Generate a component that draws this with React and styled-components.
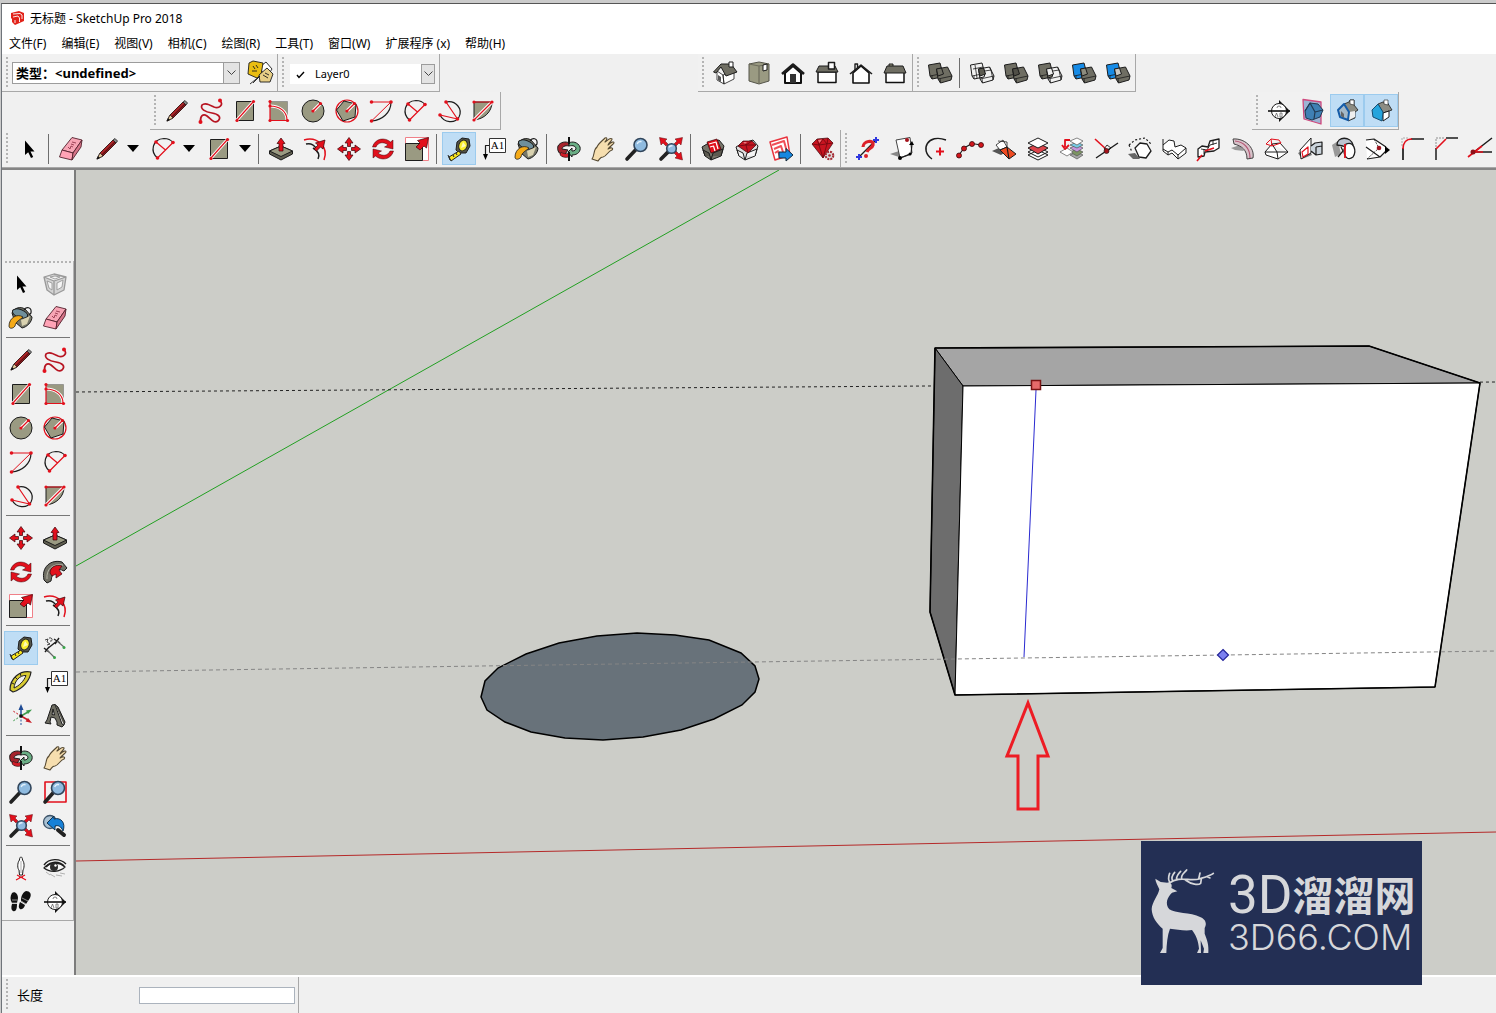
import React, { useState } from 'react';
import styled, { createGlobalStyle } from 'styled-components';

const RED = '#e2101c';
const OLIVE = '#9a9a82';
const DARK = '#1c1c1c';

const GlobalStyle = createGlobalStyle`
  * {
    box-sizing: border-box;
  }

  body {
    margin: 0;
    background: #f0f0f0;
    color: #000;
    font-family: 'Noto Sans', 'Noto Sans CJK SC', sans-serif;
    font-size: 12px;
  }

  button,
  select,
  input {
    font-family: inherit;
  }
`;

const Desktop = styled.div`
  display: flex;
  flex-direction: column;
  min-height: 100vh;
  overflow: hidden;
  background: #cbcbcb;
  padding-top: 3px;
`;

const AppWindow = styled.div`
  position: relative;
  flex: 1;
  display: flex;
  flex-direction: column;
  margin-left: 1px;
  border-top: 1px solid #555;
  border-left: 1px solid #6f747a;
  background: #f0f0f0;
`;

const TitleBar = styled.header`
  display: flex;
  align-items: center;
  gap: 5px;
  height: 29px;
  padding: 0 0 2px 8px;
  background: #fff;
`;

const MenuBar = styled.nav`
  display: flex;
  align-items: center;
  gap: 15px;
  height: 21px;
  padding-left: 7px;
  background: #fff;
`;

const MenuItem = styled.button`
  padding: 0;
  border: none;
  background: none;
  color: #000;
  font-size: 12px;
  line-height: 20px;
  white-space: nowrap;
`;

const ToolbarRow = styled.div`
  display: flex;
  height: 38px;
  overflow: hidden;
`;

const Toolbar = styled.div`
  display: flex;
  flex: none;
  align-items: center;
  margin-left: ${(props) => props.$start || 'initial'};
  margin-right: ${(props) => props.$end || 'initial'};
  padding-left: 3px;
  border-right: 1px solid #a8a8a8;
  border-bottom: 1px solid #a8a8a8;
  background: #f1f1f1;
`;

const Grip = styled.span`
  flex: none;
  width: 2px;
  height: 32px;
  margin: 0 4px 0 1px;
  background: repeating-linear-gradient(#b4b4b4 0 2px, transparent 2px 4px);
`;

const Separator = styled.span`
  flex: none;
  width: 1px;
  height: 30px;
  margin: 0 5px 0 2px;
  background: #6e6e6e;
`;

const ToolButton = styled.button`
  display: flex;
  flex: none;
  align-items: center;
  justify-content: ${(props) => (props.$split ? 'flex-end' : 'center')};
  gap: 8px;
  width: ${(props) => (props.$split ? '56px' : '34px')};
  height: ${(props) => (props.$tall ? '34px' : '33px')};
  padding: 0 ${(props) => (props.$split ? '4px' : '0')} 0 0;
  border: 1px solid ${(props) => (props.$active ? '#9ccbee' : 'transparent')};
  background: ${(props) => (props.$active ? '#bfddf5' : 'none')};

  svg {
    display: block;
    flex: none;
  }
`;

const ComboBox = styled.label`
  position: relative;
  display: block;
  width: ${(props) => props.$width};
  margin: ${(props) => props.$margin};
`;

const ComboSelect = styled.select`
  appearance: none;
  display: block;
  width: 100%;
  height: ${(props) => (props.$plain ? '20px' : '22px')};
  padding: 0 18px 0 ${(props) => (props.$plain ? '24px' : '3px')};
  border: 1px solid ${(props) => (props.$plain ? '#fff' : '#9c9c9c')};
  border-radius: 0;
  background: #fff;
  color: #000;
  font-size: ${(props) => (props.$plain ? '11px' : '13px')};
  font-weight: ${(props) => (props.$plain ? '400' : '700')};
`;

const ComboArrow = styled.span`
  position: absolute;
  top: 0;
  right: 0;
  bottom: 0;
  display: flex;
  align-items: center;
  justify-content: center;
  width: ${(props) => (props.$plain ? '14px' : '17px')};
  border: 1px solid #9c9c9c;
  background: #e3e3e3;
  pointer-events: none;
`;

const ComboCheck = styled.span`
  position: absolute;
  top: 6px;
  left: 6px;
  display: flex;
  pointer-events: none;
`;

const Workspace = styled.main`
  flex: 1;
  display: flex;
  border-top: 2px solid #858585;
  border-bottom: 2px solid #fff;
`;

const Dock = styled.aside`
  flex: none;
  width: 74px;
  padding-top: 91px;
  border-right: 2px solid #7c7c7c;
`;

const DockPanel = styled.div`
  padding-bottom: 1px;
  border-right: 1px solid #b4b4b4;
  border-bottom: 1px solid #a8a8a8;
  background: #f1f1f1;
`;

const DockGrip = styled.div`
  height: 2px;
  margin: 0 2px 4px 3px;
  background: repeating-linear-gradient(90deg, #b4b4b4 0 2px, transparent 2px 4px);
`;

const DockGroup = styled.div`
  display: grid;
  grid-template-columns: 34px 34px;
  padding-left: 2px;

  & + & {
    margin-top: 2px;
    padding-top: 6px;
    background: linear-gradient(#777, #777) 4px 0 / 64px 1px no-repeat;
  }
`;

const Viewport = styled.svg`
  flex: 1;
  display: block;
  min-width: 0;
  background: #cccdc8;
`;

const StatusBar = styled.footer`
  display: flex;
  height: 36px;
`;

const Measurement = styled.label`
  display: flex;
  align-items: center;
  width: 297px;
  padding: 0 3px;
  border-right: 1px solid #a8a8a8;
`;

const MeasurementLabel = styled.span`
  flex: 1;
  padding: 0 0 2px 5px;
  font-size: 13px;
`;

const MeasurementInput = styled.input`
  width: 156px;
  height: 17px;
  border: 1px solid #abb3bd;
  background: #fff;
  font-size: 12px;
`;

const Badge = styled.div`
  position: absolute;
  right: 74px;
  bottom: 28px;
  display: flex;
  gap: 12px;
  width: 281px;
  height: 144px;
  padding: 26px 0 0 9px;
  background: #232f54;
  color: #d6d7da;
`;

const BadgeText = styled.div`
  display: flex;
  flex-direction: column;
  white-space: nowrap;
`;

const BadgeName = styled.span`
  display: flex;
  align-items: center;
  height: 56px;
  font-family: Roboto, sans-serif;
  font-size: 53px;
  font-weight: 400;
  line-height: 56px;
`;

const BadgeNameCjk = styled.span`
  padding-bottom: 4px;
  font-family: 'Noto Sans CJK SC', sans-serif;
  font-size: 41px;
  font-weight: 700;
`;

const BadgeDomain = styled.span`
  font-family: Inter, sans-serif;
  font-size: 36px;
  font-weight: 300;
  line-height: 28px;
`;

const Dots = ({ points, r = 1.6 }) =>
  points.map(([x, y]) => <circle key={`${x}-${y}`} cx={x} cy={y} r={r} fill={RED} />);

const line = { fill: 'none', stroke: DARK, strokeWidth: 1.2 };
const redLine = { fill: 'none', stroke: RED, strokeWidth: 1.2 };
const olive = { fill: OLIVE, stroke: DARK, strokeWidth: 1 };
const red = { fill: RED, stroke: '#3a0508', strokeWidth: 0.7 };
const white = { fill: '#fff', stroke: DARK, strokeWidth: 1 };
const steel = { fill: '#6f6e63', stroke: DARK, strokeWidth: 1 };

const Lens = ({ cx = 15.5, cy = 8, r = 6.5 }) => (
  <>
    <path d={`M2 22 L${cx - r * 0.7} ${cy + r * 0.7}`} stroke="#222" strokeWidth="3.6" strokeLinecap="round" />
    <circle cx={cx} cy={cy} r={r} fill="#8fbbe0" stroke="#31465c" strokeWidth="1.6" />
    <path d={`M${cx - r * 0.5} ${cy - 1} A${r * 0.5} ${r * 0.5} 0 0 1 ${cx + 1} ${cy - r * 0.5}`} fill="none" stroke="#e2f1fc" strokeWidth="1.4" />
  </>
);

// Two overlapping solids shared by the solid tools
const Solids = ({ back, front, overlap }) => (
  <>
    <path d="M0.5 4 L12 2 L15 13 L14 16 L4 18 L2 15 Z" fill={back} stroke={DARK} />
    <path d="M2 15 L12 13 L15 13 M4 14.500 L4 18" {...line} strokeWidth="0.800" />
    <path d="M8.5 8 L19.5 6 L24 15 L23 19 L12.500 22 L10 18 Z" fill={front} stroke={DARK} />
    <path d="M10 18 L24 15 M12 17.500 L12.500 22" {...line} strokeWidth="0.800" />
    {front === 'none' && <path d="M8.500 11 L21 9 L23 19 M19.500 6 L21 9" {...line} strokeWidth="0.800" />}
    {back === 'none' && <path d="M3 8 L13 6 M5 4 L7 17" {...line} strokeWidth="0.800" />}
    <path d="M8.5 8 L13.500 7 L15.500 13 L10 15 Z" fill={overlap} stroke={DARK} />
  </>
);

const SectionMark = () => (
  <>
    <path d="M12 1 L23 12 L12 23 L12 20 L18 12 L12 4 Z" fill="#111" />
    <circle cx="12" cy="12" r="7.5" {...white} />
    <path d="M1 12 H23" stroke="#111" strokeWidth="1.6" />
    <path d="M10 9 a2 2 0 1 1 4 0 M8 18 l1.5 -4 l1.5 4 M13 14 v4 M13 14 h2 v4 h-2" {...line} stroke="#666" strokeWidth="0.8" />
  </>
);

const Crate = ({ gem }) => (
  <>
    <path d="M1 10 L6 7 L18 3 L23 9 L20 19 L10 23 L4 19 Z" fill={gem ? '#dedede' : '#77756a'} stroke={DARK} />
    <path d="M4 19 L2 13 L8 16 L10 23 L12 16 L22 12 L20 19" fill={gem ? '#f4f4f4' : '#5c5a50'} stroke={DARK} />
    {gem ? (
      <>
        <path d="M3 9 L8 4 L17 4 L21 8 L13 16 Z" {...red} fill="#c41420" />
        <path d="M8 4 L11 8 L17 4 M3 9 L11 8 L21 8 M11 8 L13 16" {...line} stroke="#6c0810" strokeWidth="0.800" />
        <path d="M8 5 H12 L10 7 Z" fill="#f07a80" />
      </>
    ) : (
      <>
        <path d="M6 5 L16 2 L20 12 L10 16 Z" {...red} />
        <path d="M8 7 L15 5 L17 12 M9 10 L12.500 9 L14 14" fill="none" stroke="#fff" strokeWidth="1.200" />
      </>
    )}
  </>
);

const drawings = {
  select: <path d="M8 3.500 V18 L11.200 15.200 L14 21 L16.200 20 L13.500 14.500 H17.500 Z" fill="#000" />,
  component: (
    <g fill="none" stroke="#999" strokeWidth="1.300">
      <path d="M1 5 L11 2 L23 5 L21 18 L11 23 L4 18 Z M1 5 L11 9 L23 5 M11 9 V23" fill="#d4d4d4" />
      <path d="M4 9 L9 11 V18 L6 16 Z M14 11 L20 8 L19 15 L14 18 Z M7 5 L12 4 L17 5 L12 7 Z" fill="#f4f4f4" strokeWidth="0.900" />
    </g>
  ),
  paint: (
    <>
      <path d="M3 7 C5 2 11 0 16 3 L23 11 C23 16 18 21 13 22 L6 16 Z" fill="#77786a" stroke={DARK} />
      <ellipse cx="11" cy="7.500" rx="8" ry="4" fill="#6f8f9b" stroke={DARK} transform="rotate(20 11 7.500)" />
      <path d="M12 14 L21 10 L18 18 L13 20 Z" fill="#d9d2b0" />
      <path d="M15 4 C17 0 23 1 22 7 L20 9" {...line} />
      <path d="M14 11 C8 7 0 12 0 20 C0 23 4 23 6 20 C7 15 11 14 14 11 Z" fill="#f5aa18" stroke={DARK} strokeWidth="0.800" />
    </>
  ),
  eraser: (
    <g stroke="#54202c" strokeWidth="0.900" strokeLinejoin="round">
      <path d="M13 0.500 L23 3 L14 16 L3 13 Z" fill="#f7a5b5" />
      <path d="M3 13 L14 16 L13 23 L0.500 20 Z" fill="#ffa3b6" />
      <path d="M14 16 L23 3 L22 10 L13 23 Z" fill="#d77589" />
      <path d="M9 10 L11 12 L12 9 L14 10 M12 7 L15 8 M13 5 L17 6" fill="none" stroke="#94394d" />
    </g>
  ),
  pencil: (
    <>
      <path d="M2 22 L5 16 L18 3 L21 6 L8 19 Z" fill="#ab2427" stroke="#33100e" strokeWidth="0.900" />
      <path d="M2 22 L5 16 L8 19 Z" fill="#e9cf9f" stroke="#222" strokeWidth="0.700" />
      <path d="M1.500 22.500 L3 19 L5 21 Z" fill="#111" />
      <path d="M18 3 L20 1.500 L22.500 4 L21 6 Z" fill="#888" stroke="#222" strokeWidth="0.800" />
      <path d="M7 18 L20 5" stroke="#5e1013" strokeWidth="1.200" />
    </>
  ),
  freehand: (
    <>
      <path d="M1.500 23 C1 17 4 14 8 17 C12 20 15 25 19 22 C23 18 19 15 13 14 C6 13 1 10 3 6 C6 3 11 6 15 8 C20 10 25 6 21 1.500" fill="none" stroke="#b71522" strokeWidth="1.700" />
      <Dots points={[[1.5, 23], [21, 1.5]]} r={2} />
    </>
  ),
  rectangle: (
    <>
      <rect x="3.500" y="2.500" width="17" height="19" {...olive} />
      <path d="M4 21 L20 3" stroke="#fff" strokeWidth="3.200" />
      <path d="M4 21 L20 3" {...redLine} />
      <Dots points={[[4, 21.5], [20.5, 2.5]]} />
    </>
  ),
  rotatedRectangle: (
    <>
      <rect x="3.500" y="2.500" width="17" height="19" {...olive} stroke="#777" strokeWidth="0.600" />
      <path d="M3 7 C12 7 20 12 20 21" stroke="#fff" strokeWidth="3" fill="none" />
      <path d="M3 2 V21.500 H20 M3 7 C12 7 20 12 20 21" {...redLine} />
      <Dots points={[[3, 2.5], [3, 7], [3, 21.5], [20.5, 21.5]]} />
    </>
  ),
  circle: (
    <>
      <circle cx="12" cy="12" r="11" {...olive} />
      <path d="M12 12 L19 5" stroke="#fff" strokeWidth="3.200" />
      <path d="M12 12 L19.500 4.500" {...redLine} />
      <Dots points={[[12, 12], [19.5, 4.5]]} />
    </>
  ),
  polygon: (
    <>
      <circle cx="12" cy="12" r="11" {...redLine} />
      <path d="M9 2 L21 5 L20 18 L8 22 L1.500 11 Z" {...olive} />
      <path d="M12 12 L19 5" stroke="#fff" strokeWidth="3.200" />
      <path d="M12 12 L19.500 4.500" {...redLine} />
      <Dots points={[[12, 12], [19.5, 4.5]]} />
    </>
  ),
  arc: (
    <>
      <path d="M22 3 C22 14 13 21 3 22" {...line} />
      <path d="M2.500 3 H22 L2.500 22" {...redLine} strokeWidth="1" />
      <Dots points={[[2.5, 3], [22, 3], [2.5, 22]]} r={1.8} />
    </>
  ),
  twoPointArc: (
    <>
      <path d="M6.500 21 C-1 15 1 2 13 1.500 C17 1.500 20 3 22 5.500" {...line} />
      <path d="M5 5 L14.500 13 M22 5.500 L6.500 21" {...redLine} />
      <Dots points={[[5, 5], [22, 5.5], [6.5, 21]]} r={1.8} />
    </>
  ),
  threePointArc: (
    <>
      <path d="M9 3 C19 1 26 10 22 18 C18 25 7 24 3 16" {...line} />
      <path d="M9 3 L20.500 20 L3 16" {...redLine} />
      <Dots points={[[9, 3], [20.5, 20], [3, 16]]} r={1.8} />
    </>
  ),
  pie: (
    <>
      <path d="M3 3 H21 C21 13 13 20 3 21 Z" {...olive} />
      <path d="M3 21 L21 3" stroke="#fff" strokeWidth="3.200" />
      <path d="M3 3 H21 L3 21" {...redLine} />
      <Dots points={[[3, 3], [21, 3], [3, 21]]} />
    </>
  ),
  pushPull: (
    <>
      <path d="M0.500 14 L12 9 L23.500 14 V17 L12 23 L0.500 17 Z" fill="#5f5e50" stroke={DARK} />
      <path d="M0.500 14 L12 9 L23.500 14 L12 19.500 Z" {...olive} />
      <path d="M12 1 L16 6.500 H14 V14 H10 V6.500 H8 Z" {...red} />
    </>
  ),
  offset: (
    <>
      <path d="M1 3 C14 -1 26 10 21 23" {...redLine} strokeWidth="1.500" />
      <path d="M3 7 C7 6 11 8 13 11 M10 11 C15 14 17 18 15 22" {...line} strokeWidth="1.500" />
      <path d="M11 12 L15 8 L12.500 6 L22 3 L20 12 L17.500 10 L13.500 14 Z" {...red} />
    </>
  ),
  move: (
    <g {...red}>
      <path d="M12 0.500 L16 6 H13.500 V9.500 H10.500 V6 H8 Z M12 23.500 L16 18 H13.500 V14.500 H10.500 V18 H8 Z" />
      <path d="M0.500 12 L6 8 V10.500 H9.500 V13.500 H6 V16 Z M23.500 12 L18 8 V10.500 H14.500 V13.500 H18 V16 Z" />
    </g>
  ),
  rotate: (
    <g {...red} strokeWidth="0.500">
      <path d="M1.500 10 C4 1 14 0 19.500 5 L22 3 V12 L13.500 10 L17 8 C13 4.500 7 5 5 10 Z" />
      <path d="M22.500 14 C20 23 10 24 4.500 19 L2 21 V12 L10.500 14 L7 16 C11 19.500 17 19 19 14 Z" />
    </g>
  ),
  followMe: (
    <>
      <path d="M1 20 C-2 7 8 -1 19 2 L24 8 L21 11 C14 7 9 12 8 21 L4 23 Z" {...steel} />
      <path d="M4 19 C3 9 10 3 20 5" {...line} stroke="#c9c7b8" strokeWidth="0.800" />
      <path d="M7 13 C7 7 13 4 19 6 L16 10 L19 14 L13 18 L13 14 L9 16 Z" {...red} />
    </>
  ),
  scale: (
    <>
      <path d="M0.500 0.500 H23.500 V23.500 H0.500 Z" fill="#fff" stroke="#f08088" />
      <rect x="0.500" y="6.500" width="17" height="17" {...olive} />
      <path d="M11 10 L15 6 L12.500 3.500 L23.500 0.500 L21.500 11 L19 9 L15 13 Z" {...red} />
    </>
  ),
  tape: (
    <>
      <path d="M10 5 L15 1 L22 2 L23 9 L19 16 L12 16 L9 13 Z" fill="#55554c" stroke={DARK} />
      <ellipse cx="16" cy="8.500" rx="4.200" ry="5.500" fill="#f8ec2c" stroke="#222" transform="rotate(20 16 8.500)" />
      <path d="M16 5 L19 9 L14 11 Z" fill="#fffbb8" />
      <path d="M12 14 L2 20 L4 24 L14 17 Z" fill="#f8e51c" stroke="#222" />
      <path d="M1 18 L3 23 M6 18 L7 20 M9 16 L10 18" stroke="#222" />
    </>
  ),
  text: (
    <>
      <path d="M8.500 1.500 H24.500 V15.500 H8.500 Z" fill="#fff" stroke="#333" />
      <text x="16.500" y="12" fontFamily="Liberation Serif, serif" fontSize="11" textAnchor="middle">A1</text>
      <path d="M8 8.500 H4.500 V18" {...line} />
      <path d="M2 17 H7 L4.500 23 Z" fill="#000" />
    </>
  ),
  dimension: (
    <>
      <path d="M4 13 L14 5 M1 12 L6 16 M2 16 L6 11 M11 3 L17 7 M12 8 L16 2" {...line} strokeWidth="1.400" />
      <path d="M4 14 L11 21 M14 5 L21 11" {...line} stroke="#666" />
      <path d="M2 4 L5 3 L4 6 L7 8 L4 9 M6 2 C10 1 10 6 7 5" {...line} strokeWidth="0.800" />
      <circle cx="11.500" cy="21.500" r="1.500" fill="#39a54a" />
      <circle cx="21" cy="11.500" r="1.500" fill="#39a54a" />
    </>
  ),
  protractor: (
    <>
      <path d="M22 2 C11 0 1 8 1 20 L4 22 C14 19 21 10 22 2 Z" fill="#d8ca32" stroke="#222" strokeWidth="1.200" />
      <path d="M17 5.500 C11 5 5.500 11 5 18 C10 16 15 11 17 5.500 Z" fill="#f1f1f1" stroke="#222" />
      <path d="M11 3 L12 6 M6 7 L8 9 M3 13 L5 14" stroke="#222" />
    </>
  ),
  axes: (
    <>
      <path d="M12 12 V5" stroke="#27559b" strokeWidth="1.600" />
      <path d="M12 0 L14.500 6 H9.500 Z" fill="#1e4a94" />
      <path d="M12 12 L19 8" stroke="#3e9b4c" strokeWidth="1.600" />
      <path d="M23 5.500 L19 10 L17 6.500 Z" fill="#3e9b4c" />
      <path d="M12 12 L19 16" stroke="#c91b25" strokeWidth="1.600" />
      <path d="M23 19 L16.500 17.500 L19 14 Z" fill="#c91b25" />
      <path d="M12 12 V22" stroke="#27559b" strokeDasharray="2 1.500" />
      <path d="M12 12 L4 17" stroke="#3e9b4c" strokeDasharray="2 1.500" />
      <path d="M12 12 L4 7" stroke="#c91b25" strokeDasharray="2 1.500" />
      <circle cx="12" cy="12" r="1.800" fill="#111" />
    </>
  ),
  text3d: (
    <>
      <path d="M9 1 L12 0.500 L19 20 L21 21 L19 23 L14 21 L14 18 L12 14 L8 13 L7 18 L8 20 L2 19 L4 16 Z" {...steel} />
      <path d="M10 5 L9 10.500 L11.500 11 Z" fill="#eee" stroke={DARK} />
      <path d="M12 0.500 L15 3 L22 18 L21 21" fill="#55544b" stroke={DARK} />
    </>
  ),
  orbit: (
    <>
      <path d="M1 9 C3 5 9 4 12 6 V9 C8 8 5 10 5 12 L11 13 L6 20 L5 18 C1 16 0 12 1 9 Z" fill="#a5232c" stroke={DARK} />
      <path d="M23 10 C21 5 15 4 12 6 V9 C16 8 19 9 19 12 C18 14 16 14 15 14 V11 L11 15 L15 20 V18 C21 18 24 14 23 10 Z" fill="#6aae85" stroke={DARK} />
      <path d="M4 15 C6 17 9 17 12 16 V20 C8 21 5 20 3 18 Z" fill="#d31c28" stroke={DARK} strokeWidth="0.600" />
      <path d="M12 0 V7 M12 15 V24" stroke="#111" strokeWidth="2" />
    </>
  ),
  pan: (
    <path
      d="M1 22 C4 18 2 13 6 10 C7 7 11 4 14 1 C16 0 17 2 14 5 C16 4 19 0 21 2 C22 3 17 6 17 8 C20 5 23 4 23 6 C23 7 18 10 17 12 C20 10 23 11 21 13 C17 14 16 19 12 20 C9 20 9 22 7 24 Z"
      fill="#f6deaf"
      stroke="#554932"
      strokeWidth="1.100"
    />
  ),
  zoom: <Lens />,
  zoomWindow: (
    <>
      <rect x="2" y="2" width="21" height="20" {...redLine} strokeWidth="1.600" />
      <Lens cx={15} cy={8} />
    </>
  ),
  zoomExtents: (
    <>
      <g fill="#e2101c" stroke="#5c0b10" strokeWidth="0.500">
        <path d="M0.500 0.500 L8 2 L6 4 L9 7 L7 9 L4 6 L2 8 Z" />
        <path d="M23.500 0.500 L16 2 L18 4 L15 7 L17 9 L20 6 L22 8 Z" />
        <path d="M23.500 23 L16 21 L18 19 L15 16 L17 14 L20 17 L22 15 Z" />
      </g>
      <Lens cx={12.5} cy={11.5} r={4.8} />
    </>
  ),
  previous: (
    <>
      <circle cx="7" cy="8" r="6.500" fill="#a9c1d3" stroke="#3c5368" strokeWidth="1.300" />
      <path d="M15 16 L21 21" stroke="#222" strokeWidth="4" strokeLinecap="round" />
      <path d="M4 9 L11 2 V5 C18 3 23 9 20 17 C18 12 15 11 12 12 V16 Z" fill="#1781d8" stroke="#12334f" />
    </>
  ),
  positionCamera: (
    <>
      <path d="M10.500 4 C10.500 0 13.500 0 13.500 4 C16 7 15 13 14 14 L13.500 19 H10.500 L10 14 C8.500 13 8 7 10.500 4 Z" {...white} />
      <path d="M12 5 V17" {...line} stroke="#888" strokeWidth="0.700" />
      <path d="M8 19 L17 24 M16 19 L7 24 M10 21 H14" {...redLine} />
    </>
  ),
  lookAround: (
    <>
      <path d="M1 12 C6 6 17 6 22 11 C17 16 7 17 1 12 Z" fill="#f5f5f5" stroke="#222" strokeWidth="1.300" />
      <path d="M1 9 C6 2 17 2 23 8" {...line} strokeWidth="1.400" />
      <path d="M3 11 C8 5 16 5 21 10" {...line} strokeWidth="1.800" />
      <circle cx="11" cy="11" r="4" fill="#2b2b2b" />
      <circle cx="12.500" cy="9.500" r="1.200" fill="#fff" />
      <path d="M3 16 L7 19 M7 18 L12 21 M13 19 L19 20 M17 17 L22 18" stroke="#aaa" strokeWidth="0.900" />
    </>
  ),
  walk: (
    <g fill="#111">
      <path d="M3 3 C6 1 9 4 9 8 L8 13 L3 13 C1 10 1 6 3 3 Z M3 14 L8 14 C8 19 7 22 4 21 C2 20 2 17 3 14 Z" />
      <path d="M17 1 C21 1 23 4 21 8 L17 14 L12 11 C12 7 13 3 17 1 Z M11 12 L16 15 C15 19 12 20 11 19 C9 17 10 15 11 12 Z" />
      <path d="M3 10 H8 M3 13 H8 M13 8 L19 11 M12 11 L17 14" stroke="#999" strokeWidth="0.900" />
    </g>
  ),
  section: <SectionMark />,
  iso: (
    <>
      <path d="M4 10 L10 14 L11 23 L4 19 Z M10 14 L21 10 V18 L11 23 Z" {...white} strokeWidth="0.800" />
      <path d="M0.500 11 L8 3 L18 3 L24 11 L13 15 L8 6 L3 12 Z" {...steel} />
      <path d="M5 14 L8 16 V21 L5 19 Z" fill="#555" />
      <path d="M16 1 H20 V6 H16 Z" {...white} />
    </>
  ),
  top: (
    <>
      <path d="M2 3 L12 1 L22 3 V20 L12 23 L2 20 Z" {...olive} stroke="#55554a" />
      <path d="M12 5 V23 M2 3 L12 5 L22 3" {...line} stroke="#6d6c5c" />
      <path d="M16 4 L20 3 V9 L16 10 Z" {...white} />
    </>
  ),
  front: (
    <>
      <path d="M4 12 V22 H20 V12 L12 5 Z" fill="#fff" stroke="#111" strokeWidth="2" />
      <path d="M1 13 L12 3.500 L23 13" {...line} strokeWidth="2.600" />
      <path d="M9 13 H15 V22 H9 Z" fill="#333" />
    </>
  ),
  right: (
    <>
      <path d="M3 11 H21 V21.500 H3 Z" fill="#fff" stroke="#111" strokeWidth="1.500" />
      <path d="M4 5 H20 L23 11 H1 Z" {...steel} />
      <path d="M13.500 1.500 H19.500 V8 H13.500 Z" {...white} strokeWidth="1.500" />
    </>
  ),
  back: (
    <>
      <path d="M6 9 V3 H8.500 V7" {...white} strokeWidth="1.400" />
      <path d="M4 12 V22 H20 V12 L12 5 Z" fill="#fff" stroke="#111" strokeWidth="1.600" />
      <path d="M1 13 L12 4 L23 13" {...line} strokeWidth="1.600" />
    </>
  ),
  left: (
    <>
      <path d="M6 5 V3 H10 V5" {...olive} />
      <path d="M3 11 H21 V21.500 H3 Z" fill="#fff" stroke="#111" strokeWidth="1.500" />
      <path d="M4 5 H20 L23 12 H1 Z" {...steel} />
    </>
  ),
  outerShell: <Solids back="#6f6e63" front="#6f6e63" overlap="#6f6e63" />,
  intersect: <Solids back="none" front="none" overlap="#5c5b51" />,
  union: <Solids back="#6f6e63" front="#6f6e63" overlap="#504f47" />,
  subtract: <Solids back="#6f6e63" front="none" overlap="#eee" />,
  trim: <Solids back="#168be6" front="#6f6e63" overlap="#8d8c7e" />,
  split: <Solids back="#168be6" front="#6f6e63" overlap="#c9c9c4" />,
  sectionPlanes: (
    <>
      <path d="M2 0.500 L20 3 L20 25 L3 20 Z" fill="#9db4d4" stroke="#d0497e" strokeWidth="1.300" />
      <path d="M4 12 L9 4 L17 5 L22 11 L19 18 L11 21 L5 19 Z" fill="#3f80b4" stroke="#223a52" />
      <path d="M4 12 L9 4 L14 13 L22 11 M14 13 L13 20" {...line} stroke="#223a52" />
    </>
  ),
  sectionCuts: (
    <>
      <path d="M9 5 L14 3 L15 1 H19 V6 L23 11 L20 13 V19 L13 22 Z" fill="#8d8d84" stroke={DARK} strokeWidth="0.800" />
      <path d="M14 13 L20 12 V18 L14 21 Z" fill="#eee" />
      <path d="M3 11 L9 5 L14 13 L13 21 L5 18 Z" fill="#a4b8c8" stroke="#155ca8" strokeWidth="2" />
      <path d="M6 12 L9 15 V19 L6 17 Z" fill="#666" />
      <path d="M15 1 H19 V6 L15 5 Z" fill="#fff" stroke={DARK} strokeWidth="0.600" />
    </>
  ),
  sectionFill: (
    <>
      <path d="M9 5 L14 3 L18 3 L23 11 L14 14 Z" fill="#8d8d84" stroke={DARK} strokeWidth="0.800" />
      <path d="M14 14 L20 12 V18 L14 22 Z" {...white} />
      <path d="M3 11 L9 5 L14 13 L13 22 L4 18 Z" fill="#25a4dc" stroke="#174d70" />
      <path d="M15 1 H19 V6 L15 5 Z" fill="#fff" stroke={DARK} strokeWidth="0.600" />
    </>
  ),
  warehouse: <Crate />,
  extensionWarehouse: <Crate gem />,
  layout: (
    <>
      <path d="M1 5 L18 0 L21 18 L6 23 Z" fill="#fff" stroke="#e9343e" strokeWidth="1.500" />
      <path d="M3 8 L15 4 L18 15 M5 12 L12 9 L14 15 M6 16 L9 14 L11 20" {...redLine} stroke="#ef5058" strokeWidth="2" />
      <path d="M10 15 H17 V11.500 L24 18 L17 24 V21 H10 Z" fill="#1687e0" stroke="#14293b" />
    </>
  ),
  extensionManager: (
    <>
      <path d="M1 7 L6 2 L17 1 L22 6 L12 21 Z" {...red} fill="#c81420" />
      <path d="M1 7 L8 8 L22 6 M6 2 L8 8 L12 21 L16 7 L17 1 M8 8 L12 2 L16 7" {...line} stroke="#70070f" strokeWidth="0.800" />
      <path d="M7 3 L11 2.500 L8.500 6 Z" fill="#f0757c" />
      <circle cx="18.500" cy="18.500" r="3.800" fill="#ddd" stroke="#a52a33" strokeWidth="2" strokeDasharray="2 1" />
      <circle cx="18.500" cy="18.500" r="1.300" fill="#a52a33" />
    </>
  ),
  query: (
    <>
      <path d="M3 20 L20 3" {...line} />
      <path d="M7 10 C7 4 18 2 17 8 C16 12 12 11 11 15" fill="none" stroke="#dc2029" strokeWidth="3.200" />
      <circle cx="10" cy="19" r="2" fill="#dc2029" />
      <path d="M17 3 H23 M20 0 V6 M0 20 H6 M3 17 V23" stroke="#3038df" strokeWidth="2" />
    </>
  ),
  rotateFace: (
    <>
      <path d="M0 17 L9 14 L20 18 L12 21 Z" fill="#888" />
      <path d="M6 3 L20 0.500 L22 16 L10 21 Z" {...white} stroke="#444" />
      <path d="M10 21 L21 17 L22 7" {...line} />
      <circle cx="17" cy="3" r="2" fill="#a5131c" />
      <circle cx="10" cy="21" r="2" fill="#000" />
      <circle cx="20" cy="17" r="1.500" fill="#000" />
      <path d="M19 8 L22 4 L24 8 Z" fill="#000" />
    </>
  ),
  arcCenter: (
    <>
      <path d="M8 22 C-5 13 4 -4 22 3" {...line} strokeWidth="1.400" />
      <path d="M12 14.500 H20 M16 10.500 V18.500" stroke={RED} strokeWidth="2" />
    </>
  ),
  weld: (
    <>
      <path d="M1 18 L6 11 L14 6.500 L23 8" {...line} />
      <g fill="#d3151c" stroke="#38080b" strokeWidth="0.800">
        <circle cx="1" cy="18.500" r="2.500" />
        <circle cx="6" cy="11.500" r="2.500" />
        <circle cx="14" cy="7" r="2.500" />
        <circle cx="23" cy="8" r="2.500" />
      </g>
    </>
  ),
  unfold: (
    <>
      <path d="M0 14 L9 10 L15 14 L9 18 Z" fill="#555" />
      <path d="M4 8 L11 3 L15 10 L8 13 Z M6 4 L15 5 L15 10" {...white} strokeWidth="0.800" />
      <path d="M8 13 L15 10 L24 17 L17 22 Z" fill="#ee4b22" stroke={DARK} />
      <path d="M15 10 L17 22" {...line} />
    </>
  ),
  stack: (
    <>
      <path d="M2 18 L12 13 L22 18 L12 23 Z M2 15 L12 10 L22 15 L12 20 Z" {...white} />
      <path d="M2 11 L12 6 L22 11 L12 17 Z" fill="#dd454c" stroke={DARK} />
      <path d="M2 6 L12 1 L22 6 L12 11 Z" {...white} />
    </>
  ),
  stackColors: (
    <>
      <g stroke="#555" strokeWidth="0.700">
        <path d="M10 18 L17 15 L23 18 L17 22 Z" fill="#a8a8a8" />
        <path d="M10 15 L17 12 L23 15 L17 19 Z" fill="#7c9562" />
        <path d="M10 11 L17 8 L23 11 L17 15 Z" fill="#c796de" />
        <path d="M10 8 L17 5 L23 8 L17 11 Z" fill="#76cce6" />
        <path d="M10 4 L17 1 L23 4 L17 8 Z" fill="#fff" />
        <path d="M0 15 L7 11 L13 15 L7 19 Z" fill="#fff" />
      </g>
      <path d="M10 3 H5 V10 M2 8 L5 12 L9 8" {...redLine} strokeWidth="1.800" />
    </>
  ),
  intersectLines: (
    <>
      <path d="M2 21 L24 6" {...line} strokeWidth="1.400" />
      <path d="M1 2 L13 13" {...redLine} strokeWidth="1.600" />
      <path d="M13 8 L17 11 L13 15 L10 12 Z" {...line} strokeWidth="0.900" />
      <circle cx="12.500" cy="14" r="2.500" fill="#a6121a" stroke="#222" strokeWidth="0.700" />
    </>
  ),
  offsetSolid: (
    <>
      <path d="M0 17 L7 16 L12 22 L5 22 Z" fill="#666" />
      <path d="M1 8 L7 3 L17 1 L23 7" {...line} strokeDasharray="2 2" />
      <path d="M7 11 L12 6 L19 7 L23 14 L18 21 L11 20 Z" {...white} strokeWidth="1.300" />
      <path d="M1 8 L4 15" {...line} strokeDasharray="2 2" />
    </>
  ),
  extrude: (
    <path d="M1 2 V14 L6 18 L10 16 L16 22 L24 16 V11 L19 8 L13 10 L12 4 L7 3 L1 8 M1 12 L6 15 L10 13 L16 18 L24 11 M6 15 V18 M16 18 V22" {...white} />
  ),
  sweep: (
    <>
      <path d="M2 12 L6 9 L12 10 L14 4 L23 2 V11 L18 14 L9 15 L8 19 L2 20 Z" {...white} strokeWidth="1.300" />
      <path d="M5 12 L11 13 L14 8 L21 6 M8 12 L8 17 M17 4 V8" {...line} strokeWidth="0.900" />
      <path d="M1 24 L6 18 M9 14 L18 11" {...redLine} strokeWidth="1.600" />
    </>
  ),
  pipe: (
    <>
      <path d="M1 11 L10 8 L14 14 L5 13 Z" fill="#999" />
      <path d="M3 2 C14 1 25 10 23 21 L17 22 C17 13 12 9 4 7 Z" fill="#d8c3ca" stroke="#444" />
      <path d="M5 4 C14 5 20 11 20 21" {...redLine} stroke="#b35372" />
    </>
  ),
  loft: (
    <>
      <path d="M1 15 L8 7 L16 6 L24 15 L14 22 L2 18 Z M8 7 L13 15 L24 15 M13 15 L14 22 M1 15 L13 15" {...white} />
      <path d="M2 7 L7 2 L15 3 L17 6 L8 9 Z M7 2 L8 9" {...redLine} strokeWidth="1" />
    </>
  ),
  mirror: (
    <>
      <path d="M0 16 L10 11 L14 18 L4 22 Z" fill="#777" />
      <path d="M2 13 L13 1 V16 L3 22 Z" {...white} />
      <path d="M4 15 L10 10 V17 L5 20 Z" {...redLine} />
      <path d="M13 9 L17 6 L24 5 V17 L18 18 L13 14 M18 10 L24 9 M18 10 V18" {...line} fill="#cbd4dc" />
    </>
  ),
  shape: (
    <>
      <path d="M0 8 L6 4 L9 17 L3 20 Z" fill="#999" />
      <path d="M5 8 C5 -1 19 -1 21 8 L15 11 L11 9 Z" fill="#bcc4d0" stroke={DARK} strokeWidth="1.300" />
      <path d="M14 7 C22 4 25 14 21 20 C16 24 12 20 12 13 Z" {...white} strokeWidth="1.300" />
      <path d="M9 10 L11 14 L6 20" {...line} />
      <path d="M13 7 V21" {...redLine} strokeWidth="1.800" />
    </>
  ),
  project: (
    <>
      <path d="M0 3 L8 2 L23 12 L14 20 L1 22 Z" fill="#fff" />
      <path d="M0 3 L8 2 L20 10 M0 10 L14 20 L1 22 M14 20 L20 14" {...line} />
      <path d="M1 22 L13 11 L8 2" {...line} strokeWidth="0.800" strokeDasharray="2 1" />
      <path d="M19 9 L24 13 L19 17 Z" fill="#000" />
      <circle cx="13" cy="11" r="2.300" fill="#9e1520" />
    </>
  ),
  fillet: (
    <>
      <path d="M3 23 V11 M11 2 H24" {...line} strokeWidth="1.700" />
      <path d="M3 12 C3 6 6 2 12 2" {...redLine} strokeWidth="1.600" />
      <path d="M2 9 V1 H9" {...line} stroke="#999" strokeWidth="0.800" strokeDasharray="2 1" />
    </>
  ),
  chamfer: (
    <>
      <path d="M2 23 V11 M12 1 H24" {...line} strokeWidth="1.500" />
      <path d="M2 12 L12 2" {...redLine} strokeWidth="1.600" />
      <path d="M2 10 V1 H10" {...line} stroke="#777" strokeWidth="0.800" strokeDasharray="2 1" />
    </>
  ),
  angle: (
    <>
      <path d="M6 15 L24 1 M6 15 H24" {...line} strokeWidth="1.500" />
      <path d="M0 20 L14 9 M6 15 H15" {...redLine} strokeWidth="1.600" />
      <circle cx="5" cy="15" r="2.500" fill="#8e1018" />
    </>
  ),
  classify: (
    <g stroke={DARK} strokeWidth="0.900">
      <path d="M13 5 L18 1 L24 8 L20 14 L13 10 Z" fill="#fff" />
      <path d="M1 2 L5 0 L15 2 L13 14 L9 17 L0 13 Z" fill="#e9bd12" />
      <path d="M5 5 L7 8 M8 4 L10 7 M4 10 H9" fill="none" />
      <path d="M11 14 L19 7 L25 13 L22 21 L12 21 Z" fill="#e8cf86" />
      <path d="M2 23 L12 15 L5 22 M15 14 L20 17 M17 12 L21 14" fill="none" />
    </g>
  ),
};

const Icon = ({ name }) => (
  <svg width="24" height="24" viewBox="0 0 24 24" overflow="visible" strokeLinejoin="round" aria-hidden="true">
    {drawings[name]}
  </svg>
);

const Chevron = () => (
  <svg width="9" height="6" viewBox="0 0 9 6" aria-hidden="true">
    <path d="M0.500 0.500 L4.500 4.500 L8.500 0.500" fill="none" stroke="#444" />
  </svg>
);

const menus = ['文件(F)', '编辑(E)', '视图(V)', '相机(C)', '绘图(R)', '工具(T)', '窗口(W)', '扩展程序 (x)', '帮助(H)'];

const viewTools = ['iso', 'top', 'front', 'right', 'back', 'left'];
const solidTools = ['outerShell', '|', 'intersect', 'union', 'subtract', 'trim', 'split'];
const drawTools = ['pencil', 'freehand', 'rectangle', 'rotatedRectangle', 'circle', 'polygon', 'arc', 'twoPointArc', 'threePointArc', 'pie'];
const sectionTools = ['section', 'sectionPlanes', 'sectionCuts', 'sectionFill'];
const mainTools = [
  'select', '|', 'eraser', 'pencil+', 'twoPointArc+', 'rectangle+', '|',
  'pushPull', 'offset', 'move', 'rotate', 'scale', '|',
  'tape', 'text', 'paint', '|',
  'orbit', 'pan', 'zoom', 'zoomExtents', '|',
  'warehouse', 'extensionWarehouse', 'layout', '|', 'extensionManager',
];
const pluginTools = [
  'query', 'rotateFace', 'arcCenter', 'weld', 'unfold', 'stack', 'stackColors', 'intersectLines', 'offsetSolid',
  'extrude', 'sweep', 'pipe', 'loft', 'mirror', 'shape', 'project', 'fillet', 'chamfer', 'angle',
];
const dockGroups = [
  ['select', 'component', 'paint', 'eraser'],
  ['pencil', 'freehand', 'rectangle', 'rotatedRectangle', 'circle', 'polygon', 'arc', 'twoPointArc', 'threePointArc', 'pie'],
  ['move', 'pushPull', 'rotate', 'followMe', 'scale', 'offset'],
  ['tape', 'dimension', 'protractor', 'text', 'axes', 'text3d'],
  ['orbit', 'pan', 'zoom', 'zoomWindow', 'zoomExtents', 'previous'],
  ['positionCamera', 'lookAround', 'walk', 'section'],
];

function ToolGroup({ tools, active = [], onPick, start, end }) {
  return (
    <Toolbar role="toolbar" $start={start} $end={end}>
      <Grip />
      {tools.map((tool, index) => {
        if (tool === '|') return <Separator key={index} />;
        const split = tool.endsWith('+');
        const name = tool.replace('+', '');
        return (
          <ToolButton key={tool} aria-label={name} $split={split} $active={active.includes(name)} onClick={() => onPick?.(name)}>
            <Icon name={name} />
            {split && (
              <svg width="12" height="7" viewBox="0 0 12 7" aria-hidden="true">
                <path d="M0 0 H12 L6 7 Z" fill="#000" />
              </svg>
            )}
          </ToolButton>
        );
      })}
    </Toolbar>
  );
}

function Scene() {
  return (
    <Viewport viewBox="76 170 1420 805" preserveAspectRatio="xMinYMin slice" role="img" aria-label="模型">
      <path d="M76 566 L779 170" stroke="#22a022" />
      <path d="M76 861 L1496 832" stroke="#b52a2a" />
      <path d="M76 392 L1496 382" stroke="#222" strokeDasharray="3 3" />
      <polygon
        points="481,697 487,710 505,722 531,732 565,738 603,740 643,737 681,730 714,719 742,705 755,692 759,679 755,666 741,653 709,640 675,635 637,633 597,636 559,643 526,654 498,668 485,681"
        fill="#68727a"
        stroke="#000"
        strokeWidth="1.500"
      />
      <g stroke="#000" strokeLinejoin="round">
        <path d="M935 348 L1369 346 L1480 383 L963 386 Z" fill="#a5a5a5" />
        <path d="M935 348 L963 386 L955 695 L930 612 Z" fill="#6d6d6d" />
        <path d="M963 386 L1480 383 L1435 687 L955 695 Z" fill="#fff" />
        <path d="M935 348 L1369 346 L1480 383 L1435 687 L955 695 L930 612 Z" fill="none" strokeWidth="1.600" />
      </g>
      <path d="M76 672 L1496 651" stroke="#858585" strokeDasharray="4 3" />
      <path d="M1036 390 L1024 657" stroke="#2a2ad0" />
      <rect x="1031.500" y="380.500" width="9" height="9" fill="#e66a6a" stroke="#7a1414" strokeWidth="1.500" />
      <path d="M1223 649.500 L1228.500 655 L1223 660.500 L1217.500 655 Z" fill="#7b80f0" stroke="#24249a" strokeWidth="1.200" />
      <path d="M1028 703 L1048 756 H1038 V809 H1018 V756 H1007 Z" fill="none" stroke="#ed1c24" strokeWidth="3" />
    </Viewport>
  );
}

function Deer() {
  return (
    <svg width="66" height="88" viewBox="60 105 198 264" aria-hidden="true">
      <path
        d="M76 140 L92 150 L112 152 C122 150 128 158 124 168 L142 178 L126 182 C112 195 104 215 118 232 C135 245 180 240 212 256 C226 262 232 275 224 288 L224 305 C232 325 237 340 235 363 L220 363 L222 350 L212 325 L213 363 L201 363 L207 350 C205 325 198 310 186 294 C165 298 140 292 120 290 C112 310 110 335 109 363 L90 363 L98 348 L98 290 C80 275 66 255 65 232 C66 210 85 190 88 172 C84 162 76 150 76 140 Z"
        fill="#d6d7da"
      />
      <path
        d="M118 153 C150 130 180 150 210 140 C230 134 244 130 250 124 M120 152 C112 140 116 132 119 124 M128 147 C122 136 128 128 134 121 M140 142 C138 132 146 124 152 118 M155 140 C152 128 164 122 170 114 M166 144 C185 158 205 160 212 154 M206 141 L210 123 M212 154 L214 141 M232 134 L240 138"
        fill="none"
        stroke="#d6d7da"
        strokeWidth="5"
        strokeLinecap="round"
      />
    </svg>
  );
}

function App() {
  const [tool, setTool] = useState('tape');

  return (
    <Desktop>
      <GlobalStyle />
      <AppWindow>
        <TitleBar>
          <svg width="15" height="15" viewBox="0 0 15 15" aria-hidden="true">
            <path d="M1 3 L9 1 L14 3 V11 L5 15 L2 12 V9 L1 8 Z" fill="#e2231a" />
            <path d="M3 4 L10 3.500 L12 5 V9 M3 7 L8 6 L9.500 8 V12 M5 10 V13" fill="none" stroke="#fff" strokeWidth="0.900" />
          </svg>
          <span>无标题 - SketchUp Pro 2018</span>
        </TitleBar>
        <MenuBar>
          {menus.map((menu) => (
            <MenuItem key={menu}>{menu}</MenuItem>
          ))}
        </MenuBar>

        <ToolbarRow>
          <Toolbar>
            <Grip />
            <ComboBox $width="228px" $margin="0 3px 0 0">
              <ComboSelect aria-label="类型">
                <option>类型：&lt;undefined&gt;</option>
              </ComboSelect>
              <ComboArrow>
                <Chevron />
              </ComboArrow>
            </ComboBox>
            <ToolButton aria-label="classify">
              <Icon name="classify" />
            </ToolButton>
          </Toolbar>
          <Toolbar>
            <Grip />
            <ComboBox $width="145px" $margin="2px 4px 0 2px">
              <ComboSelect $plain aria-label="图层">
                <option>Layer0</option>
              </ComboSelect>
              <ComboCheck>
                <svg width="9" height="9" viewBox="0 0 9 9" aria-hidden="true">
                  <path d="M1 5 L3 7.500 L8 2" fill="none" stroke="#000" strokeWidth="1.400" />
                </svg>
              </ComboCheck>
              <ComboArrow $plain>
                <Chevron />
              </ComboArrow>
            </ComboBox>
          </Toolbar>
          <ToolGroup tools={viewTools} start="258px" />
          <ToolGroup tools={solidTools} />
        </ToolbarRow>
        <ToolbarRow>
          <ToolGroup tools={drawTools} start="148px" onPick={setTool} />
          <ToolGroup tools={sectionTools} active={['sectionCuts', 'sectionFill']} start="auto" end="97px" />
        </ToolbarRow>
        <ToolbarRow>
          <ToolGroup tools={mainTools} active={[tool]} onPick={setTool} />
          <ToolGroup tools={pluginTools} />
        </ToolbarRow>

        <Workspace>
          <Dock>
            <DockPanel>
              <DockGrip />
              {dockGroups.map((group) => (
                <DockGroup key={group[0]}>
                  {group.map((name) => (
                    <ToolButton key={name} aria-label={name} $tall $active={name === tool} onClick={() => setTool(name)}>
                      <Icon name={name} />
                    </ToolButton>
                  ))}
                </DockGroup>
              ))}
            </DockPanel>
          </Dock>
          <Scene />
        </Workspace>

        <StatusBar>
          <Measurement>
            <Grip />
            <MeasurementLabel>长度</MeasurementLabel>
            <MeasurementInput type="text" />
          </Measurement>
        </StatusBar>

        <Badge>
          <Deer />
          <BadgeText>
            <BadgeName>
              3D<BadgeNameCjk>溜溜网</BadgeNameCjk>
            </BadgeName>
            <BadgeDomain>3D66.COM</BadgeDomain>
          </BadgeText>
        </Badge>
      </AppWindow>
    </Desktop>
  );
}

export default App;
